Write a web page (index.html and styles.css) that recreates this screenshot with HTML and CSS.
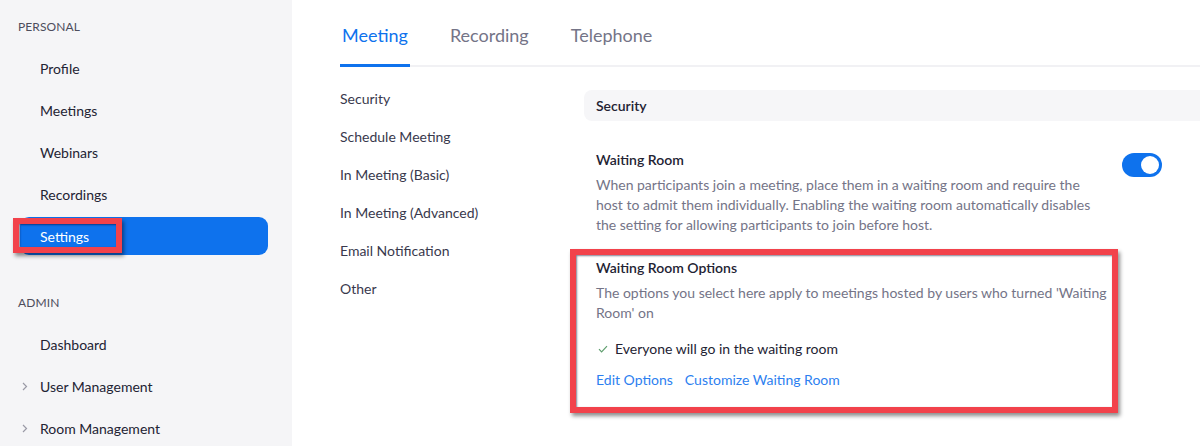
FILE: index.html
```html
<!DOCTYPE html>
<html lang="en">
<head>
<meta charset="utf-8">
<title>Settings</title>
<link rel="stylesheet" href="styles.css">
</head>
<body>
<div class="page">
  <aside class="sidebar">
    <div class="sb-heading">PERSONAL</div>
    <div class="sb-item">Profile</div>
    <div class="sb-item">Meetings</div>
    <div class="sb-item">Webinars</div>
    <div class="sb-item">Recordings</div>
    <div class="sb-item active">Settings<span class="mark mark-settings"></span></div>
    <div class="sb-heading admin">ADMIN</div>
    <div class="sb-item">Dashboard</div>
    <div class="sb-item"><svg class="chev" width="6" height="9" viewBox="0 0 6 9"><path d="M1 1l3.5 3.5L1 8" fill="none" stroke="#9a9aa6" stroke-width="1.2"/></svg>User Management</div>
    <div class="sb-item"><svg class="chev" width="6" height="9" viewBox="0 0 6 9"><path d="M1 1l3.5 3.5L1 8" fill="none" stroke="#9a9aa6" stroke-width="1.2"/></svg>Room Management</div>
  </aside>
  <main class="main">
    <nav class="tabs">
      <div class="tab active">Meeting</div>
      <div class="tab">Recording</div>
      <div class="tab">Telephone</div>
    </nav>
    <div class="content">
      <ul class="subnav">
        <li>Security</li>
        <li>Schedule Meeting</li>
        <li>In Meeting (Basic)</li>
        <li>In Meeting (Advanced)</li>
        <li>Email Notification</li>
        <li>Other</li>
      </ul>
      <section class="panel">
        <div class="panel-head">Security</div>
        <div class="setting">
          <div class="setting-text">
            <div class="setting-title">Waiting Room</div>
            <div class="setting-desc">When participants join a meeting, place them in a waiting room and require the host to admit them individually. Enabling the waiting room automatically disables the setting for allowing participants to join before host.</div>
          </div>
          <div class="toggle"><span class="knob"></span></div>
        </div>
        <div class="options">
          <div class="setting-title">Waiting Room Options</div>
          <div class="setting-desc options-desc">The options you select here apply to meetings hosted by users who turned 'Waiting Room' on</div>
          <div class="check-line"><svg class="check" width="10" height="8" viewBox="0 0 10 8"><path d="M1 4.2l2.6 2.6L9 1.2" fill="none" stroke="#5f9e6e" stroke-width="1.2"/></svg>Everyone will go in the waiting room</div>
          <div class="links"><a class="link">Edit Options</a><a class="link">Customize Waiting Room</a></div>
          <span class="mark mark-options"></span>
        </div>
      </section>
    </div>
  </main>
</div>
</body>
</html>
```

FILE: styles.css
```css
* { box-sizing: border-box; }
html, body { margin: 0; padding: 0; }
body {
  font-family: Lato, "Open Sans", Arial, sans-serif;
  color: #232333;
  background: #fff;
  width: 1200px;
  height: 446px;
  overflow: hidden;
}
.page {
  display: flex;
  height: 446px;
}
.sidebar {
  width: 292px;
  flex: none;
  background: #f5f5f7;
  padding-top: 19px;
}
.sb-heading {
  font-size: 12px;
  line-height: 16px;
  color: #4d4d5c;
  padding-left: 18px;
  margin-bottom: 14px;
  letter-spacing: 0.1px;
}
.sb-heading.admin { margin-top: 40px; }
.sb-item {
  position: relative;
  display: flex;
  align-items: center;
  height: 38px;
  margin: 0 0 4px 20px;
  width: 248px;
  padding-left: 20px;
  font-size: 14px;
  color: #232333;
  border-radius: 9px;
}
.sb-item.active {
  background: #0e72ed;
  color: #fff;
}
.chev {
  position: absolute;
  left: 2px;
  top: 15px;
}
.mark {
  position: absolute;
  border: 6px solid #f2424b;
  box-shadow: 2px 3px 4px rgba(0, 0, 0, 0.45), inset 1px 1px 2px rgba(0, 0, 40, 0.5);
  pointer-events: none;
}
.mark-settings {
  left: -7px;
  top: 1px;
  width: 109px;
  height: 35px;
}
.main {
  flex: 1;
  min-width: 0;
  padding-left: 48px;
}
.tabs {
  display: flex;
  border-bottom: 2px solid #f1f1f4;
  padding-top: 20px;
}
.tab {
  font-size: 18px;
  line-height: 30px;
  padding: 0 2px 14px;
  margin-right: 38px;
  color: #747487;
  margin-bottom: -2px;
  border-bottom: 3px solid transparent;
}
.tab.active {
  color: #0e72ed;
  border-bottom-color: #0e72ed;
}
.content {
  display: flex;
}
.subnav {
  list-style: none;
  margin: 13px 0 0;
  padding: 0;
  width: 244px;
  flex: none;
}
.subnav li {
  font-size: 14px;
  line-height: 38px;
  color: #39394d;
}
.panel {
  flex: 1;
  margin-top: 23px;
}
.panel-head {
  background: #f6f6f8;
  border-radius: 8px 0 0 8px;
  height: 31px;
  line-height: 31px;
  padding-left: 12px;
  font-size: 14px;
  font-weight: 600;
  color: #232333;
}
.setting {
  display: flex;
  justify-content: space-between;
  padding: 29px 38px 0 12px;
}
.setting-text { width: 500px; }
.setting-title {
  font-size: 14px;
  line-height: 20px;
  font-weight: 600;
  color: #232333;
  margin-bottom: 5px;
}
.setting-desc {
  font-size: 14px;
  line-height: 20px;
  color: #747487;
}
.toggle {
  flex: none;
  width: 40px;
  height: 24px;
  margin-top: 3px;
  border-radius: 12px;
  background: #0e72ed;
  position: relative;
}
.knob {
  position: absolute;
  right: 3px;
  top: 3px;
  width: 18px;
  height: 18px;
  border-radius: 50%;
  background: #fff;
}
.options {
  position: relative;
  margin-top: 23px;
  padding-left: 12px;
}
.options-desc { width: 520px; }
.check-line {
  display: flex;
  align-items: center;
  margin-top: 16px;
  font-size: 14px;
  line-height: 20px;
  color: #232333;
}
.check { margin: 0 7px 0 2px; }
.links {
  display: flex;
  gap: 12px;
  margin-top: 11px;
  font-size: 14px;
  line-height: 20px;
}
.link { color: #2d7ff0; }
.mark-options {
  left: -14px;
  top: -9px;
  width: 548px;
  height: 164px;
}
```
